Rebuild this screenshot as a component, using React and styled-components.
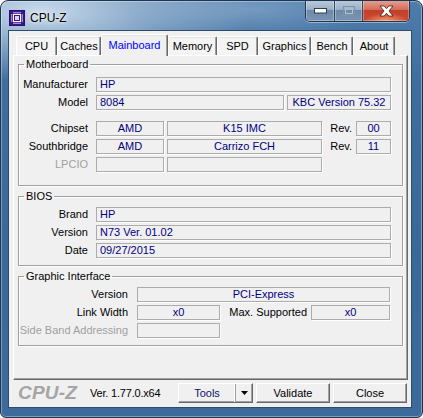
import React from "react";
import styled, { createGlobalStyle } from "styled-components";

const GlobalStyle = createGlobalStyle`
  html, body {
    margin: 0;
    padding: 0;
    background: #ffffff;
  }
  body {
    font-family: "Liberation Sans", Arial, sans-serif;
    font-size: 11px;
  }
`;

const tabs = [
  { name: "CPU", w: 41 },
  { name: "Caches", w: 44 },
  { name: "Mainboard", w: 67, active: true },
  { name: "Memory", w: 49 },
  { name: "SPD", w: 41 },
  { name: "Graphics", w: 53 },
  { name: "Bench", w: 42 },
  { name: "About", w: 42 },
];

const ChipIcon = () => (
  <svg width="16" height="16" viewBox="0 0 16 16">
    <rect x="0" y="0" width="16" height="16" fill="#2c0d6e" />
    <rect x="1" y="1" width="14" height="14" fill="#3a1790" />
    <rect x="4.5" y="4.5" width="7" height="7" fill="none" stroke="#fff" strokeWidth="1" />
    <rect x="6" y="6" width="4" height="4" fill="#d8d0ff" />
    {[5, 7, 9, 11].map((p) => (
      <g key={p} fill="#fff">
        <rect x={p - 0.5} y="2" width="1" height="1.4" />
        <rect x={p - 0.5} y="12.6" width="1" height="1.4" />
        <rect x="2" y={p - 0.5} width="1.4" height="1" />
        <rect x="12.6" y={p - 0.5} width="1.4" height="1" />
      </g>
    ))}
  </svg>
);

export default function App() {
  return (
    <>
      <GlobalStyle />
      <Window>
        <TitleBar>
          <TitleLeft>
            <ChipIcon />
            <TitleText>CPU-Z</TitleText>
          </TitleLeft>
          <CaptionButtons>
            <CapButton $w={28}>
              <svg width="13" height="6" viewBox="0 0 13 6">
                <rect x="0.5" y="0.5" width="12" height="4.5" fill="#fff" stroke="#2c3e52" />
              </svg>
            </CapButton>
            <CapButton $w={27}>
              <svg width="12" height="10" viewBox="0 0 12 10">
                <rect x="0.5" y="0.5" width="11" height="9" fill="none" stroke="#7f94aa" />
                <rect x="2.5" y="3" width="7" height="4.5" fill="none" stroke="#b4c4d4" />
              </svg>
            </CapButton>
            <CloseButton>
              <svg width="15" height="12" viewBox="0 0 15 12">
                <path
                  d="M1 1 L5.2 1 L7.5 3.7 L9.8 1 L14 1 L10 6 L14 11 L9.8 11 L7.5 8.3 L5.2 11 L1 11 L5 6 Z"
                  fill="#fff"
                  stroke="#4a1a14"
                  strokeWidth="0.8"
                />
              </svg>
            </CloseButton>
          </CaptionButtons>
        </TitleBar>

        <Client>
          <PageArea>
            <TabStrip>
              {tabs.map((t) => (
                <Tab key={t.name} $w={t.w} $active={t.active}>
                  {t.name}
                </Tab>
              ))}
            </TabStrip>
            <Page>
              <Group $mt={2} $pt={6} $pb={13}>
                <Legend>Motherboard</Legend>
                <Row>
                  <Label $w={69}>Manufacturer</Label>
                  <Field $w={295}>HP</Field>
                </Row>
                <Row>
                  <Label $w={69}>Model</Label>
                  <Field $w={188}>8084</Field>
                  <Field $w={104} $center>KBC Version 75.32</Field>
                </Row>
                <Row $mt={8}>
                  <Label $w={69}>Chipset</Label>
                  <Field $w={68} $center>AMD</Field>
                  <Field $w={155} $center>K15 IMC</Field>
                  <SideLabel $w={28}>Rev.</SideLabel>
                  <Field $w={35} $center>00</Field>
                </Row>
                <Row>
                  <Label $w={69}>Southbridge</Label>
                  <Field $w={68} $center>AMD</Field>
                  <Field $w={155} $center>Carrizo FCH</Field>
                  <SideLabel $w={28}>Rev.</SideLabel>
                  <Field $w={35} $center>11</Field>
                </Row>
                <Row>
                  <Label $w={69} $disabled>LPCIO</Label>
                  <Field $w={68} />
                  <Field $w={155} />
                </Row>
              </Group>

              <Group $mt={4} $pt={4} $pb={7}>
                <Legend>BIOS</Legend>
                <Row>
                  <Label $w={69}>Brand</Label>
                  <Field $w={295}>HP</Field>
                </Row>
                <Row>
                  <Label $w={69}>Version</Label>
                  <Field $w={295}>N73 Ver. 01.02</Field>
                </Row>
                <Row>
                  <Label $w={69}>Date</Label>
                  <Field $w={295}>09/27/2015</Field>
                </Row>
              </Group>

              <Group $mt={4} $pt={4} $pb={7}>
                <Legend>Graphic Interface</Legend>
                <Row $gap={9}>
                  <Label $w={109}>Version</Label>
                  <Field $w={253} $center>PCI-Express</Field>
                </Row>
                <Row $gap={9}>
                  <Label $w={109}>Link Width</Label>
                  <Field $w={83} $center>x0</Field>
                  <SideLabel $w={85}>Max. Supported</SideLabel>
                  <Field $w={79} $center>x0</Field>
                </Row>
                <Row $gap={9}>
                  <Label $w={109} $disabled>Side Band Addressing</Label>
                  <Field $w={83} />
                </Row>
              </Group>
            </Page>
          </PageArea>

          <BottomBar>
            <Logo>CPU-Z</Logo>
            <Version>Ver. 1.77.0.x64</Version>
            <Buttons>
              <Button $w={75}>
                <ButtonText>Tools</ButtonText>
                <DropPart>
                  <svg width="7" height="4" viewBox="0 0 7 4">
                    <path d="M0 0 L7 0 L3.5 4 Z" fill="#000" />
                  </svg>
                </DropPart>
              </Button>
              <Button $w={74}>Validate</Button>
              <Button $w={74}>Close</Button>
            </Buttons>
          </BottomBar>
        </Client>
      </Window>
    </>
  );
}

const Window = styled.div`
  width: 423px;
  height: 418px;
  box-sizing: border-box;
  display: flex;
  flex-direction: column;
  border: 1px solid #1d3452;
  border-radius: 8px 8px 6px 6px;
  overflow: hidden;
  background:
    radial-gradient(ellipse 210px 70px at 40px 10px, rgba(206, 222, 238, 0.95), rgba(206, 222, 238, 0) 100%),
    radial-gradient(ellipse 120px 30px at 250px 8px, rgba(150, 180, 210, 0.55), rgba(150, 180, 210, 0) 100%),
    linear-gradient(180deg, #4e7cab 0%, #3f6e9e 20%, #3a6899 60%, #3c6b9b 100%);
  box-shadow: inset 0 0 0 1px rgba(255, 255, 255, 0.35);
`;

const TitleBar = styled.div`
  height: 29px;
  display: flex;
  justify-content: space-between;
  align-items: flex-start;
  flex-shrink: 0;
`;

const TitleLeft = styled.div`
  display: flex;
  align-items: center;
  gap: 5px;
  padding: 9px 0 0 8px;
`;

const TitleText = styled.span`
  font-family: "Liberation Sans", Arial, sans-serif;
  font-size: 12px;
  color: #000;
  text-shadow: 0 0 6px rgba(255, 255, 255, 0.9), 0 0 3px rgba(255, 255, 255, 0.9);
`;

const CaptionButtons = styled.div`
  display: flex;
  margin-right: 12px;
  margin-top: -1px;
  height: 21px;
  border: 1px solid #243850;
  border-top: none;
  border-radius: 0 0 5px 5px;
  overflow: hidden;
  box-shadow: 0 1px 0 rgba(255, 255, 255, 0.4);
`;

const CapButton = styled.div`
  width: ${(p) => p.$w}px;
  display: flex;
  align-items: center;
  justify-content: center;
  border-right: 1px solid #34495f;
  background: linear-gradient(180deg, #bccbdb 0%, #9cb1c7 45%, #6f8aa8 50%, #7895b4 100%);
  box-shadow: inset 0 0 0 1px rgba(255, 255, 255, 0.3);
`;

const CloseButton = styled.div`
  width: 46px;
  display: flex;
  align-items: center;
  justify-content: center;
  background:
    radial-gradient(ellipse 22px 8px at 50% 100%, rgba(255, 170, 120, 0.8), rgba(255, 170, 120, 0) 100%),
    linear-gradient(180deg, #e8a393 0%, #d46e5c 45%, #c2402a 50%, #c94a34 100%);
  box-shadow: inset 0 0 0 1px rgba(255, 255, 255, 0.3);
`;

const Client = styled.div`
  flex: 1;
  margin: 0 10px 9px 7px;
  border: 1px solid #2d4b6c;
  background: #f0f0f0;
  display: flex;
  flex-direction: column;
`;

const PageArea = styled.div`
  padding: 3px 0 0 4px;
  display: flex;
  flex-direction: column;
`;

const TabStrip = styled.div`
  height: 21px;
  display: flex;
  align-items: flex-end;
  padding-left: 3px;
  position: relative;
  z-index: 1;
`;

const Tab = styled.div`
  box-sizing: border-box;
  width: ${(p) => p.$w}px;
  height: ${(p) => (p.$active ? 22 : 19)}px;
  margin-bottom: ${(p) => (p.$active ? -1 : 0)}px;
  display: flex;
  align-items: center;
  justify-content: center;
  padding-bottom: ${(p) => (p.$active ? 2 : 0)}px;
  background: ${(p) => (p.$active ? "#f0f0f0" : "#f4f4f4")};
  color: ${(p) => (p.$active ? "#0000ff" : "#000")};
  border-top: 1px solid #fff;
  border-left: 1px solid #fff;
  border-right: 1px solid #696969;
  box-shadow: inset -1px 0 0 #a0a0a0, inset 0 1px 0 #e3e3e3;
  border-radius: 2px 2px 0 0;
  font-size: 11px;
  white-space: nowrap;
`;

const Page = styled.div`
  box-sizing: border-box;
  width: 395px;
  height: 325px;
  border-top: 1px solid #fff;
  border-left: 1px solid #fff;
  border-right: 1px solid #696969;
  border-bottom: 1px solid #696969;
  box-shadow: inset -1px -1px 0 #a0a0a0;
  background: #f0f0f0;
  padding: 0 4px;
  position: relative;
  z-index: 0;
`;

const Group = styled.fieldset`
  margin: ${(p) => p.$mt}px 0 0 0;
  padding: ${(p) => p.$pt}px 0 ${(p) => p.$pb}px 0;
  border: 1px solid #a0a0a0;
  box-shadow: inset 1px 1px 0 #fff, 1px 1px 0 #fff;
  min-width: 0;
  display: flex;
  flex-direction: column;
  gap: 3px;
`;

const Legend = styled.legend`
  margin-left: 5px;
  padding: 0 2px;
  font-size: 11px;
  line-height: 13px;
  color: #000;
`;

const Row = styled.div`
  display: flex;
  align-items: center;
  height: 15px;
  margin-top: ${(p) => p.$mt || 0}px;
  gap: 3px;

  & > :first-child {
    margin-right: ${(p) => (p.$gap || 8) - 3}px;
  }
`;

const Label = styled.span`
  width: ${(p) => p.$w}px;
  flex-shrink: 0;
  text-align: right;
  white-space: nowrap;
  color: ${(p) => (p.$disabled ? "#a0a0a0" : "#000")};
  font-size: 11px;
  line-height: 13px;
`;

const SideLabel = styled(Label)`
  padding-right: 1px;
  box-sizing: border-box;
`;

const Field = styled.div`
  box-sizing: border-box;
  width: ${(p) => p.$w}px;
  height: 15px;
  flex-shrink: 0;
  border: 1px solid #acacac;
  box-shadow: 1px 1px 0 #fff;
  background: #f0f0f0;
  color: #000080;
  font-size: 11px;
  line-height: 13px;
  padding: 0 3px;
  text-align: ${(p) => (p.$center ? "center" : "left")};
  white-space: nowrap;
  overflow: hidden;
`;

const BottomBar = styled.div`
  display: flex;
  align-items: center;
  padding: 3px 0 0 9px;
  height: 20px;
`;

const Logo = styled.span`
  font-family: "Liberation Sans", Arial, sans-serif;
  font-weight: bold;
  font-style: italic;
  font-size: 19px;
  color: #a5a5a5;
  width: 72px;
  letter-spacing: 0.2px;
`;

const Version = styled.span`
  font-size: 11px;
  color: #000;
  width: 88px;
  letter-spacing: -0.2px;
`;

const Buttons = styled.div`
  display: flex;
  gap: 3px;
`;

const Button = styled.div`
  box-sizing: border-box;
  width: ${(p) => p.$w}px;
  height: 20px;
  display: flex;
  align-items: center;
  justify-content: center;
  background: #f0f0f0;
  border-top: 1px solid #fff;
  border-left: 1px solid #fff;
  border-right: 1px solid #696969;
  border-bottom: 1px solid #696969;
  box-shadow: inset -1px -1px 0 #a0a0a0;
  font-size: 11px;
  color: #000;
`;

const ButtonText = styled.span`
  flex: 1;
  text-align: center;
  color: #10106a;
`;

const DropPart = styled.span`
  width: 17px;
  height: 100%;
  display: flex;
  align-items: center;
  justify-content: center;
  border-left: 1px solid #a0a0a0;
  box-shadow: -1px 0 0 #fff;
  box-sizing: border-box;
`;
